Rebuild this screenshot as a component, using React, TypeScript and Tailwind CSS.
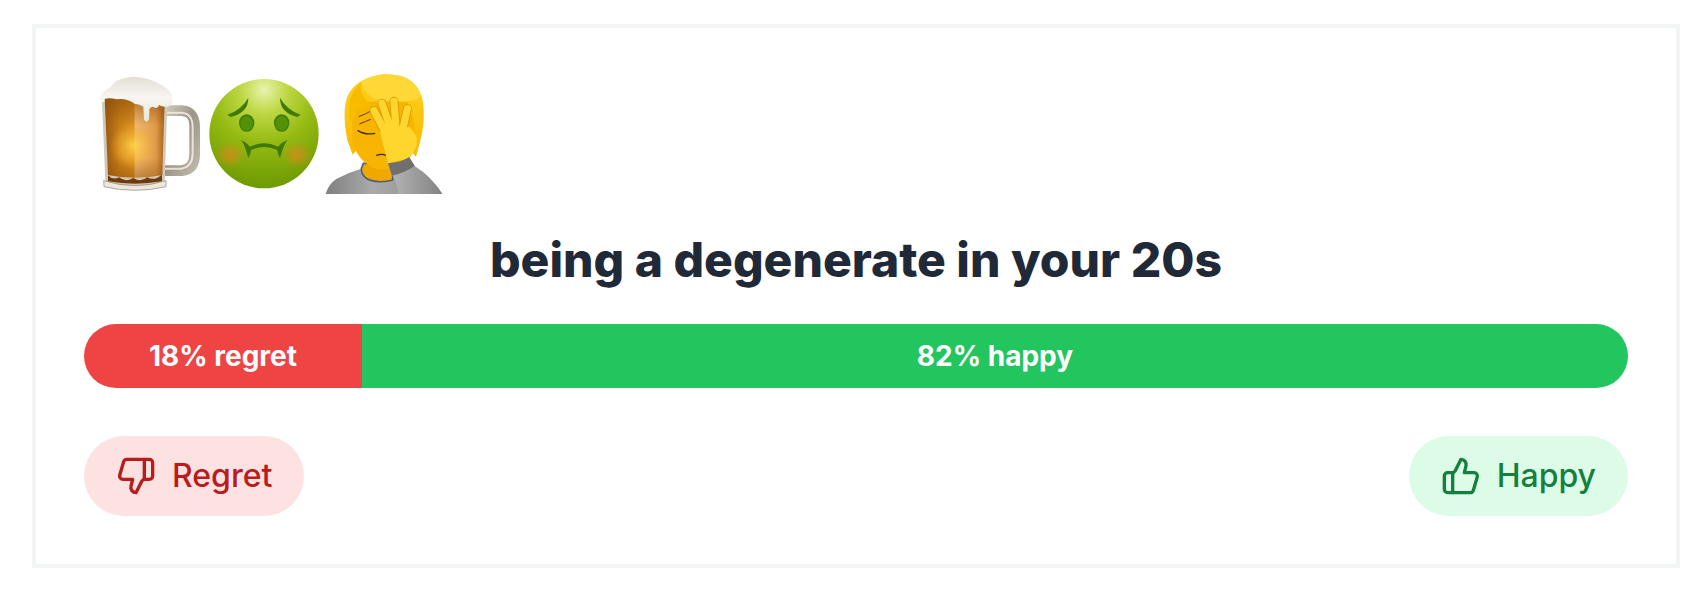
import React from 'react';
import { ThumbsDown, ThumbsUp } from 'lucide-react';

const BeerEmoji = () => (
  <svg viewBox="42 36 360 372" className="w-[120px] h-[124px] shrink-0">
    <defs>
      <linearGradient id="beerLiquid" x1="0" y1="0" x2="1" y2="0">
        <stop offset="0" stopColor="#9a5a12" />
        <stop offset="0.25" stopColor="#c67d14" />
        <stop offset="0.49" stopColor="#d8901f" />
        <stop offset="0.51" stopColor="#efba74" />
        <stop offset="0.85" stopColor="#e09a48" />
        <stop offset="1" stopColor="#a8641f" />
      </linearGradient>
      <linearGradient id="beerShade" x1="0" y1="0" x2="0" y2="1">
        <stop offset="0" stopColor="#8a4a0a" stopOpacity="0.65" />
        <stop offset="0.35" stopColor="#8a4a0a" stopOpacity="0" />
        <stop offset="0.75" stopColor="#8a4a0a" stopOpacity="0" />
        <stop offset="1" stopColor="#8a4a0a" stopOpacity="0.45" />
      </linearGradient>
      <radialGradient id="beerGlow" cx="0.5" cy="0.5" r="0.5">
        <stop offset="0" stopColor="#ffd84a" stopOpacity="0.9" />
        <stop offset="0.6" stopColor="#f7b93a" stopOpacity="0.45" />
        <stop offset="1" stopColor="#f0a030" stopOpacity="0" />
      </radialGradient>
      <linearGradient id="beerHandle" x1="0" y1="0" x2="1" y2="1">
        <stop offset="0" stopColor="#cfc8ba" />
        <stop offset="0.5" stopColor="#9c9484" />
        <stop offset="1" stopColor="#bdb6a8" />
      </linearGradient>
      <linearGradient id="beerFoam" x1="0" y1="0" x2="0" y2="1">
        <stop offset="0" stopColor="#e2ded4" />
        <stop offset="0.45" stopColor="#f8f6f1" />
        <stop offset="1" stopColor="#e9e5db" />
      </linearGradient>
    </defs>
    <path d="M285 152H335Q374 154 374 200V282Q374 328 335 332H285" fill="none" stroke="url(#beerHandle)" strokeWidth="32" strokeLinejoin="round" />
    <path d="M285 158H335Q368 160 368 202V280Q368 320 335 326H285" fill="none" stroke="#f2efe8" strokeWidth="6" opacity="0.85" />
    <path d="M96 125L106 365Q195 398 284 365L292 125Z" fill="#cfc9bb" />
    <path d="M104 112L114 345Q195 362 277 345L284 122Z" fill="url(#beerLiquid)" />
    <path d="M104 112L114 345Q195 362 277 345L284 122Z" fill="url(#beerShade)" />
    <ellipse cx="190" cy="258" rx="72" ry="72" fill="url(#beerGlow)" />
    <path d="M114 346Q128 362 148 352Q165 368 190 354Q212 368 232 352Q252 364 276 344V364Q195 378 114 364Z" fill="#6f3a0c" />
    <path d="M101 362Q195 392 288 362L288 380Q195 402 102 380Z" fill="#ece8df" stroke="#8d8576" strokeWidth="2" />
    <path d="M88 113Q98 92 122 82Q135 54 190 50Q240 52 268 72Q300 84 308 112Q310 136 292 140Q274 142 268 135Q262 148 252 142Q244 136 238 148L237 178Q230 192 222 178L220 140Q205 130 195 132Q170 114 140 118Q110 110 96 122Q88 122 88 113Z" fill="url(#beerFoam)" />
  </svg>
);

const SickEmoji = () => (
  <svg viewBox="402 36 360 372" className="w-[120px] h-[124px] shrink-0">
    <defs>
      <radialGradient id="sickFace" cx="0.5" cy="0.1" r="0.95">
        <stop offset="0" stopColor="#e8f3ae" />
        <stop offset="0.22" stopColor="#bfd845" />
        <stop offset="0.5" stopColor="#96bb12" />
        <stop offset="1" stopColor="#679600" />
      </radialGradient>
      <radialGradient id="sickCheek" cx="0.5" cy="0.5" r="0.5">
        <stop offset="0" stopColor="#d98a1a" stopOpacity="0.85" />
        <stop offset="1" stopColor="#d98a1a" stopOpacity="0" />
      </radialGradient>
    </defs>
    <circle cx="582" cy="221" r="164" fill="url(#sickFace)" />
    <ellipse cx="480" cy="284" rx="46" ry="40" fill="url(#sickCheek)" />
    <ellipse cx="682" cy="284" rx="46" ry="40" fill="url(#sickCheek)" />
    <path d="M472 164Q515 150 535 113Q535 158 482 171Z" fill="#3f7a00" />
    <path d="M692 164Q650 150 630 113Q630 158 682 171Z" fill="#3f7a00" />
    <ellipse cx="530" cy="189" rx="23" ry="26" fill="#3f7a00" />
    <ellipse cx="530" cy="190" rx="19" ry="22" fill="#52920a" />
    <ellipse cx="635" cy="189" rx="23" ry="26" fill="#3f7a00" />
    <ellipse cx="635" cy="190" rx="19" ry="22" fill="#52920a" />
    <path d="M513 240Q528 246 540 260Q582 240 624 260Q636 246 652 240Q642 256 638 268L630 294Q622 280 622 270Q582 252 543 270Q543 280 535 294L527 268Q523 254 513 240Z" fill="#3f7a00" />
  </svg>
);

const FacepalmEmoji = () => (
  <svg viewBox="762 36 360 372" className="w-[120px] h-[124px] shrink-0">
    <defs>
      <linearGradient id="palmHair" x1="0" y1="0" x2="0" y2="1">
        <stop offset="0" stopColor="#ffd21f" />
        <stop offset="1" stopColor="#f8b800" />
      </linearGradient>
      <linearGradient id="palmShirt" x1="0" y1="0" x2="1" y2="0">
        <stop offset="0" stopColor="#7f7f7f" />
        <stop offset="0.4" stopColor="#aaaaaa" />
        <stop offset="1" stopColor="#8a8a8a" />
      </linearGradient>
      <linearGradient id="palmSleeve" x1="0" y1="0" x2="1" y2="0">
        <stop offset="0" stopColor="#b8b8b8" />
        <stop offset="1" stopColor="#828282" />
      </linearGradient>
    </defs>
    {/* torso */}
    <path d="M767 402Q775 372 800 356Q835 338 878 325L975 345L1040 345Q1095 362 1117 402Z" fill="url(#palmShirt)" />
    {/* neck and collar */}
    <path d="M874 325Q874 362 925 365Q950 366 968 360V310H880Z" fill="#f0a800" stroke="#4f6078" strokeWidth="5" />
    {/* back hair */}
    <path d="M832 240Q822 190 824 150Q828 85 880 60Q925 38 970 44Q1040 50 1058 120Q1068 180 1050 245L1038 290L1020 270L858 272L848 284Z" fill="url(#palmHair)" />
    {/* face */}
    <path d="M846 180Q860 150 880 125L1012 125Q1034 170 1036 225Q1036 290 1000 310Q960 335 915 326Q866 305 848 250Z" fill="#f7b400" />
    {/* fringe */}
    <path d="M872 64Q920 38 970 44Q1035 50 1054 108Q1030 128 985 124Q935 128 905 112Q884 98 872 64Z" fill="#ffd838" />
    <path d="M874 66Q866 100 890 122L905 138Q880 136 858 156L840 186Q826 110 874 66Z" fill="#f9bb00" />
    {/* brow and eye */}
    <path d="M866 170Q886 163 904 152M868 192Q888 184 902 178" stroke="#5a3d10" strokeWidth="3" fill="none" />
    <path d="M864 212Q885 226 914 220" stroke="#3c2a12" strokeWidth="4" fill="none" strokeLinecap="round" />
    <path d="M920 286Q935 280 948 286" stroke="#3c2a12" strokeWidth="4" fill="none" strokeLinecap="round" />
    {/* hand: fingers, each with a darker edge */}
    <g fill="none" strokeLinecap="round">
      <path d="M912 152L948 220M936 130L962 205M972 124L978 205M1012 146L998 210" stroke="#d99a00" strokeWidth="27" />
      <path d="M912 152L948 220M936 130L962 205M972 124L978 205M1012 146L998 210" stroke="#ffd62e" strokeWidth="22" />
    </g>
    <path d="M954 310Q942 262 930 215L1018 200Q1046 225 1040 255Q1030 285 1012 296Z" fill="#ffd62e" />
    {/* sleeve */}
    <path d="M954 310Q990 308 1018 292L1034 318Q1085 350 1117 402H985Q980 360 966 345Z" fill="url(#palmSleeve)" />
    <path d="M954 310Q990 308 1018 292L1034 318Q1005 338 966 347Z" fill="#6f6f6f" />
  </svg>
);

export default function App() {
  return (
    <div className="min-h-[590px] bg-white pl-8 pr-5 pt-6 font-['Inter',sans-serif]">
      <div className="border-4 border-[#f3f4f6] px-12 pt-11 pb-12">
        <div className="flex mb-10">
          <BeerEmoji />
          <SickEmoji />
          <FacepalmEmoji />
        </div>

        <h2 className="text-[48px] leading-[48px] font-extrabold text-[#1f2937] text-center mb-10">
          being a degenerate in your 20s
        </h2>

        {/* Vote split bar */}
        <div className="flex h-16 rounded-full overflow-hidden mb-12 text-[28px] font-bold text-white">
          <div className="w-[18%] bg-[#ef4444] flex items-center justify-center">18% regret</div>
          <div className="w-[82%] bg-[#22c55e] flex items-center justify-center">82% happy</div>
        </div>

        <div className="flex justify-between">
          <button className="flex items-center h-20 px-8 gap-4 rounded-full bg-[#fee2e2] text-[#b91c1c] text-[32px] font-medium">
            <ThumbsDown className="w-10 h-10" />
            Regret
          </button>
          <button className="flex items-center h-20 px-8 gap-4 rounded-full bg-[#dcfce7] text-[#15803d] text-[32px] font-medium">
            <ThumbsUp className="w-10 h-10" />
            Happy
          </button>
        </div>
      </div>
    </div>
  );
}
